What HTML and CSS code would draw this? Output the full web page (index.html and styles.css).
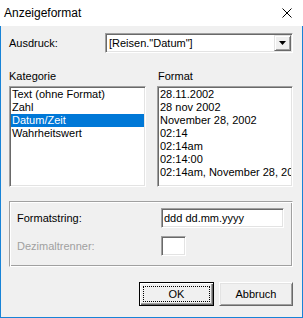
FILE: index.html
```html
<!DOCTYPE html>
<html lang="de">
<head>
  <meta charset="UTF-8">
  <title>Anzeigeformat</title>
  <link rel="stylesheet" href="styles.css">
</head>
<body>
  <div class="window">
    <div class="titlebar">
      <span class="title">Anzeigeformat</span>
      <svg class="close" width="10" height="10" viewBox="0 0 10 10">
        <path d="M0.5 0.5 L9.5 9.5 M9.5 0.5 L0.5 9.5" stroke="#000" stroke-width="1" fill="none"/>
      </svg>
    </div>
    <div class="content">
      <div class="row-expr">
        <label>Ausdruck:</label>
        <div class="combo">
          <span class="combo-text">[Reisen."Datum"]</span>
          <span class="combo-btn">
            <svg width="7" height="4" viewBox="0 0 7 4"><path d="M0 0 H7 L3.5 4 Z" fill="#000"/></svg>
          </span>
        </div>
      </div>

      <div class="lists">
        <div class="col">
          <div class="col-label">Kategorie</div>
          <ul class="listbox">
            <li>Text (ohne Format)</li>
            <li>Zahl</li>
            <li class="selected">Datum/Zeit</li>
            <li>Wahrheitswert</li>
          </ul>
        </div>
        <div class="col">
          <div class="col-label">Format</div>
          <ul class="listbox">
            <li>28.11.2002</li>
            <li>28 nov 2002</li>
            <li>November 28, 2002</li>
            <li>02:14</li>
            <li>02:14am</li>
            <li>02:14:00</li>
            <li>02:14am, November 28, 2002</li>
          </ul>
        </div>
      </div>

      <div class="group">
        <div class="field">
          <label>Formatstring:</label>
          <div class="textbox wide">ddd dd.mm.yyyy</div>
        </div>
        <div class="field disabled">
          <label>Dezimaltrenner:</label>
          <div class="textbox small"></div>
        </div>
      </div>

      <div class="buttons">
        <button class="btn default">OK</button>
        <button class="btn">Abbruch</button>
      </div>
    </div>
  </div>
</body>
</html>
```

FILE: styles.css
```css
html, body {
  margin: 0;
  padding: 0;
}
body {
  width: 303px;
  height: 318px;
  background: #fff;
  font-family: 'Liberation Sans', Arial, sans-serif;
  font-size: 11px;
  color: #000;
  overflow: hidden;
}
.window {
  width: 303px;
  height: 318px;
}
.titlebar {
  height: 26px;
  background: #fff;
  display: flex;
  align-items: center;
  justify-content: space-between;
  padding-left: 4px;
  box-sizing: border-box;
}
.title {
  font-size: 12px;
  line-height: 14px;
  margin-top: -1px;
}
.close {
  display: block;
  margin-right: 11px;
  margin-top: -1px;
}
.content {
  box-sizing: border-box;
  height: 292px;
  background: #f0f0f0;
  border: 1px solid #1883d7;
  border-top: none;
  padding: 7px 9px 11px 8px;
}
label {
  line-height: 13px;
}

/* Ausdruck */
.row-expr {
  display: flex;
  align-items: center;
  height: 20px;
}
.row-expr label {
  width: 96px;
}
.combo {
  width: 188px;
  height: 20px;
  box-sizing: border-box;
  background: #fff;
  border: 1px solid;
  border-color: #a0a0a0 #fff #fff #a0a0a0;
  box-shadow: inset 1px 1px #696969, inset -1px -1px #e3e3e3;
  display: flex;
  align-items: center;
  justify-content: space-between;
  padding: 1px;
}
.combo-text {
  padding-left: 2px;
}
.combo-btn {
  width: 17px;
  height: 16px;
  box-sizing: border-box;
  background: #f0f0f0;
  border: 1px solid;
  border-color: #e3e3e3 #696969 #696969 #e3e3e3;
  box-shadow: inset 1px 1px #fff, inset -1px -1px #a0a0a0;
  display: flex;
  align-items: center;
  justify-content: center;
}
.combo-btn svg {
  display: block;
}

/* Listen */
.lists {
  display: grid;
  grid-template-columns: 137px 136px;
  column-gap: 11px;
  margin-top: 17px;
}
.col-label {
  line-height: 13px;
  height: 13px;
  margin-bottom: 3px;
}
.col:last-child .col-label {
  padding-left: 1px;
}
.listbox {
  list-style: none;
  margin: 0;
  padding: 1px;
  height: 101px;
  box-sizing: border-box;
  background: #fff;
  border: 1px solid;
  border-color: #a0a0a0 #fff #fff #a0a0a0;
  box-shadow: inset 1px 1px #696969, inset -1px -1px #e3e3e3;
  overflow: hidden;
}
.listbox li {
  height: 13px;
  line-height: 13px;
  padding-left: 1px;
  white-space: nowrap;
  overflow: hidden;
}
.listbox li.selected {
  background: #0078d7;
  color: #fff;
}

/* Gruppe */
.group {
  margin-top: 14px;
  height: 66px;
  box-sizing: border-box;
  border: 1px solid #a0a0a0;
  border-right-color: #fff;
  border-bottom-color: #fff;
  box-shadow: inset 1px 1px #fff, inset -1px -1px #a0a0a0;
  padding: 6px 0 0 7px;
  display: flex;
  flex-direction: column;
  gap: 8px;
}
.field {
  display: flex;
  align-items: center;
}
.field label {
  width: 144px;
}
.field.disabled label {
  color: #a0a0a0;
}
.textbox {
  height: 20px;
  box-sizing: border-box;
  background: #fff;
  border: 1px solid;
  border-color: #a0a0a0 #fff #fff #a0a0a0;
  box-shadow: inset 1px 1px #696969, inset -1px -1px #e3e3e3;
  padding: 2px 2px 0 2px;
  line-height: 15px;
}
.textbox.wide {
  width: 123px;
}
.textbox.small {
  width: 25px;
}

/* Knöpfe */
.buttons {
  display: flex;
  justify-content: flex-end;
  gap: 5px;
  margin-top: 15px;
}
.btn {
  width: 75px;
  height: 24px;
  box-sizing: border-box;
  margin: 0;
  padding: 0;
  background: #f0f0f0;
  font-family: 'Liberation Sans', Arial, sans-serif;
  font-size: 11px;
  color: #000;
  border: 1px solid;
  border-color: #fff #696969 #696969 #fff;
  box-shadow: inset 1px 1px #e3e3e3, inset -1px -1px #a0a0a0;
}
.btn.default {
  border-color: #000;
  box-shadow: inset 1px 1px #fff, inset -1px -1px #696969, inset -2px -2px #a0a0a0;
  outline: 1px dotted #000;
  outline-offset: -5px;
}
.btn:last-child {
  width: 74px;
}
```
